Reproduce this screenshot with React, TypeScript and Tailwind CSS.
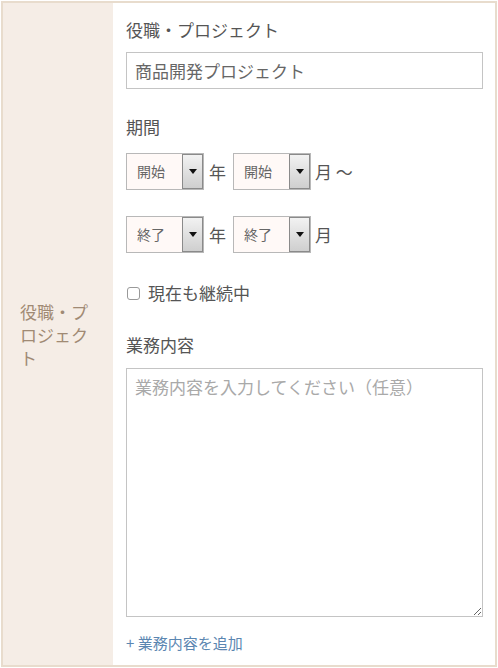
import React from "react";

const font = { fontFamily: '"Noto Sans CJK JP", "Noto Sans", sans-serif' };

function FakeSelect({ label }: { label: string }) {
  return (
    <div className="flex h-[37px] w-[78px] border border-[#b8b8b8] bg-[#fff9f7]">
      <div className="flex flex-1 items-center pl-[10px] text-[14px] text-[#666]">{label}</div>
      <div className="flex w-[21px] items-center justify-center border border-[#8a8a8a] bg-gradient-to-b from-[#f2f2f2] to-[#cfcfcf]">
        <svg width="8" height="5" viewBox="0 0 8 5">
          <path d="M0 0 L8 0 L4 5 Z" fill="#111" />
        </svg>
      </div>
    </div>
  );
}

export default function App() {
  return (
    <div className="h-[668px] w-[498px] bg-white p-px" style={font}>
      <div className="flex h-[666px] w-[496px] border-2 border-[#e8dccd]">
        <div className="flex w-[110px] shrink-0 items-center bg-[#f5ede6] px-[17px]">
          <div className="text-[17px] leading-[23px] text-[#a08a74]">役職・プロジェクト</div>
        </div>
        <div className="flex flex-1 flex-col pl-[13px] pr-[12px] pt-[15px]">
          <div className="text-[17px] leading-[24px] text-[#555]">役職・プロジェクト</div>
          <input
            className="mt-[10px] h-[37px] w-full border border-[#c4c4c4] px-[8px] text-[17px] text-[#666] outline-none"
            defaultValue="商品開発プロジェクト"
            readOnly
          />
          <div className="mt-[26px] text-[17px] leading-[24px] text-[#555]">期間</div>
          <div className="mt-[14px] flex items-center text-[17px] text-[#555]">
            <FakeSelect label="開始" />
            <span className="ml-[5px] mr-[7px]">年</span>
            <FakeSelect label="開始" />
            <span className="ml-[4px]">月 ～</span>
          </div>
          <div className="mt-[26px] flex items-center text-[17px] text-[#555]">
            <FakeSelect label="終了" />
            <span className="ml-[5px] mr-[7px]">年</span>
            <FakeSelect label="終了" />
            <span className="ml-[4px]">月</span>
          </div>
          <div className="mt-[28px] flex h-[24px] items-center text-[17px] text-[#555]">
            <span className="ml-px inline-block h-[13px] w-[13px] rounded-[3px] border border-[#999] bg-white" />
            <span className="ml-[8px]">現在も継続中</span>
          </div>
          <div className="mt-[28px] text-[17px] leading-[24px] text-[#555]">業務内容</div>
          <textarea
            className="mt-[11px] h-[249px] w-full border border-[#c4c4c4] px-[8px] py-[6px] text-[17px] leading-[24px] text-[#666] outline-none placeholder:text-[#a9a9a9]"
            placeholder="業務内容を入力してください（任意）"
          />
          <div className="mt-[16px] text-[15px] leading-[20px] text-[#5b86b1]">+ 業務内容を追加</div>
        </div>
      </div>
    </div>
  );
}
